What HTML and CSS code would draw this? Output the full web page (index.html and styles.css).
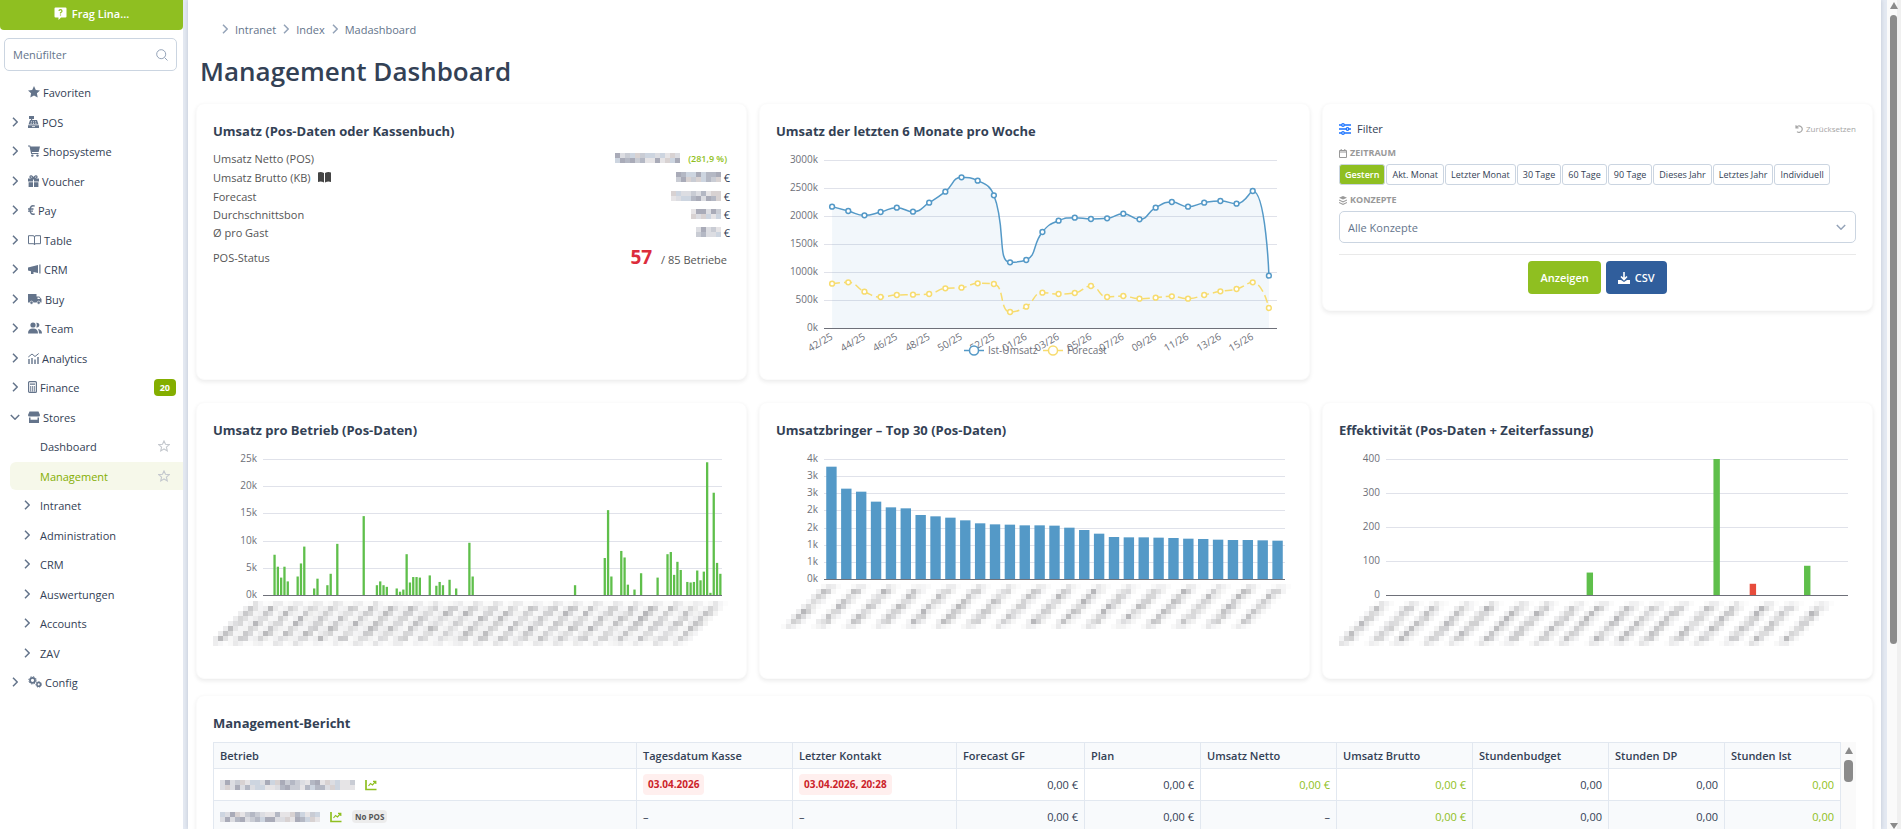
FILE: index.html
```html
<!DOCTYPE html>
<html lang="de">
<head>
  <meta charset="UTF-8" />
  <title>Management Dashboard</title>
  <meta name="viewport" content="width=device-width, initial-scale=1.0" />
  <link rel="stylesheet" href="styles.css">
</head>
<body>

<!-- Icon sprite -->
<svg class="sprite" aria-hidden="true">
  <symbol id="chev" viewBox="0 0 6 10"><path d="M1 .8 5.2 5 1 9.2" fill="none" stroke="currentColor" stroke-width="1.500"/></symbol>
  <symbol id="chev-down" viewBox="0 0 10 6"><path d="M.8 1 5 5.2 9.2 1" fill="none" stroke="currentColor" stroke-width="1.500"/></symbol>
  <symbol id="star" viewBox="0 0 12 12"><path d="M6 0 7.800 3.900l4.200.5-3.100 2.900.8 4.300L6 9.500l-3.700 2.100.8-4.300L0 4.400l4.200-.5z"/></symbol>
  <symbol id="star-o" viewBox="0 0 12 12"><path d="M6 .9 7.500 4.200l3.800.4-2.900 2.500.9 3.800L6 9l-3.300 1.900.9-3.800L.7 4.600l3.800-.4z" fill="none" stroke="currentColor" stroke-width="1.100"/></symbol>
  <symbol id="register" viewBox="0 0 11 12"><path d="M1 0h5v3H4.200v1H9l1.500 4.500H.5L2 4h1V3H1z M0 9.200h11V12H0z"/><path d="M3 5.800h1m1 0h1m1 0h1M2.600 7.400h1m1.400 0h1m1.400 0h1M4 10.600h3" stroke="#fff" stroke-width=".8"/></symbol>
  <symbol id="cart" viewBox="0 0 12 12"><path d="M0 .5h2.200l.3 1H12L10.700 7H3.900l.2 1h6.400v1H3.200L1.500 1.500H0z"/><circle cx="4.300" cy="10.600" r="1.200"/><circle cx="9.500" cy="10.600" r="1.200"/></symbol>
  <symbol id="gift" viewBox="0 0 11 12"><path d="M0 3.500h5v3H0zM6 3.500h5v3H6zM.6 7.300H5V12H.6zM6 7.300h4.400V12H6z"/><path d="M5.500 3.400C4.500.5 2 .2 2 2c0 1 1.500 1.400 3.500 1.400S9 3 9 2C9 .2 6.500.5 5.500 3.400z" fill="none" stroke="currentColor" stroke-width="1.200"/></symbol>
  <symbol id="euro" viewBox="0 0 7 12"><path d="M6.700 2.200C3.900.9 2 2.700 2 6s1.900 5.100 4.700 3.800M0 5h5.500M0 7.100h5" fill="none" stroke="currentColor" stroke-width="1.400"/></symbol>
  <symbol id="book" viewBox="0 0 13 12"><path d="M.5 1.700H5q1.500 0 1.500 1.300Q6.500 1.700 8 1.700h4.500v8H8q-1.500 0-1.500 1Q6.500 9.700 5 9.700H.5zM6.500 3v7.500" fill="none" stroke="currentColor"/></symbol>
  <symbol id="horn" viewBox="0 0 13 12"><path d="M0 4.500 10 2v8L5.500 8.900V11H3V8.300L0 7.500zM11.300 1.500h1.200v9h-1.200z"/></symbol>
  <symbol id="truck" viewBox="0 0 14 12"><path d="M0 1h8.500v2.500h2.800L13.500 6v3.500H0z"/><circle cx="3.500" cy="9.700" r="1.600" stroke="#fff" stroke-width=".6"/><circle cx="10.700" cy="9.700" r="1.600" stroke="#fff" stroke-width=".6"/><path d="M9.500 4.500h1.600L12.400 6H9.500z" fill="#fff"/></symbol>
  <symbol id="users" viewBox="0 0 14 12"><circle cx="5" cy="3" r="2.600"/><path d="M0 11.500q0-5 5-5t5 5zM8.300.8a2.400 2.400 0 1 1 0 4.600q1-2.300 0-4.600zM10 7q4 .5 4 4.500h-3q0-2.500-1-4.500z"/></symbol>
  <symbol id="stats" viewBox="0 0 11 12"><path d="M1 12V7m3 5V6m3 6V7.500M10 12V5" stroke="currentColor" stroke-width="1.400"/><path d="M.3 5 4 2l3 2.500L10.700 1.500" fill="none" stroke="currentColor"/></symbol>
  <symbol id="calc" viewBox="0 0 9 12"><rect x=".6" y=".6" width="7.800" height="10.800" rx="1" fill="none" stroke="currentColor" stroke-width="1.200"/><path d="M2 3.200h5M2 6h1.200m.7 0h1.200m.7 0H7M2 8h1.200m.7 0h1.200m.7 0H7M2 9.800h1.200m.7 0h1.200m.7 0H7" stroke="currentColor" stroke-width="1.300"/></symbol>
  <symbol id="store" viewBox="0 0 12 12"><path d="M1.500.5h9L12 4q0 1.500-1.500 1.500h-9Q0 5.500 0 4zM1 6.500h1.500v2.300h7V6.500H11V12H1z"/></symbol>
  <symbol id="cogs" viewBox="0 0 14 12"><circle cx="4.500" cy="4.300" r="2.500" fill="none" stroke="currentColor" stroke-width="1.800"/><circle cx="4.500" cy="4.300" r="3.700" fill="none" stroke="currentColor" stroke-dasharray="1.500 1.400"/><circle cx="10.700" cy="8.400" r="1.800" fill="none" stroke="currentColor" stroke-width="1.500"/><circle cx="10.700" cy="8.400" r="2.800" fill="none" stroke="currentColor" stroke-dasharray="1.300 1.200"/></symbol>
  <symbol id="trend" viewBox="0 0 12 12"><path d="M1 1v9.500h10.500" fill="none" stroke="currentColor" stroke-width="1.700"/><path d="m3.500 7 2-2.500L7.500 6 10.500 2.500M8 2.300h2.800V5" fill="none" stroke="currentColor" stroke-width="1.200"/></symbol>
</svg>

<aside class="sidebar">
  <button class="ask" type="button">
    <svg width="13" height="13" viewBox="0 0 13 13"><path d="M1.500.5h10q1 0 1 1v8q0 1-1 1H7L4.500 13v-2.500h-3q-1 0-1-1v-8q0-1 1-1z" fill="#fff"/><path d="M5 4q0-1.300 1.500-1.300T8 4.200Q8 5 6.500 5.700v.8m0 .9v1.200" fill="none" stroke="#8fbf21" stroke-width="1.200"/></svg>
    Frag Lina...
  </button>
  <div class="menu-filter">
    <input type="text" placeholder="Menüfilter" aria-label="Menüfilter" />
    <svg width="12" height="12" viewBox="0 0 12 12"><circle cx="5.200" cy="5.200" r="4.500"/><path d="m8.500 8.500 3 3"/></svg>
  </div>
  <nav class="menu">
    <a href="#" class="no-chev"><svg class="icon" width="12" height="12"><use href="#star"/></svg>Favoriten</a>
    <a href="#"><svg class="chev"><use href="#chev"/></svg><svg class="icon" width="11" height="12"><use href="#register"/></svg>POS</a>
    <a href="#"><svg class="chev"><use href="#chev"/></svg><svg class="icon" width="12" height="12"><use href="#cart"/></svg>Shopsysteme</a>
    <a href="#"><svg class="chev"><use href="#chev"/></svg><svg class="icon" width="11" height="12"><use href="#gift"/></svg>Voucher</a>
    <a href="#"><svg class="chev"><use href="#chev"/></svg><svg class="icon" width="7" height="12"><use href="#euro"/></svg>Pay</a>
    <a href="#"><svg class="chev"><use href="#chev"/></svg><svg class="icon" width="13" height="12"><use href="#book"/></svg>Table</a>
    <a href="#"><svg class="chev"><use href="#chev"/></svg><svg class="icon" width="13" height="12"><use href="#horn"/></svg>CRM</a>
    <a href="#"><svg class="chev"><use href="#chev"/></svg><svg class="icon" width="14" height="12"><use href="#truck"/></svg>Buy</a>
    <a href="#"><svg class="chev"><use href="#chev"/></svg><svg class="icon" width="14" height="12"><use href="#users"/></svg>Team</a>
    <a href="#"><svg class="chev"><use href="#chev"/></svg><svg class="icon" width="11" height="12"><use href="#stats"/></svg>Analytics</a>
    <a href="#"><svg class="chev"><use href="#chev"/></svg><svg class="icon" width="9" height="12"><use href="#calc"/></svg>Finance<span class="count">20</span></a>
    <a href="#" class="open"><svg class="chev-down"><use href="#chev-down"/></svg><svg class="icon" width="12" height="12"><use href="#store"/></svg>Stores</a>
    <a href="#" class="sub leaf">Dashboard<svg class="fav"><use href="#star-o"/></svg></a>
    <a href="#" class="sub leaf active">Management<svg class="fav"><use href="#star-o"/></svg></a>
    <a href="#" class="sub"><svg class="chev"><use href="#chev"/></svg>Intranet</a>
    <a href="#" class="sub"><svg class="chev"><use href="#chev"/></svg>Administration</a>
    <a href="#" class="sub"><svg class="chev"><use href="#chev"/></svg>CRM</a>
    <a href="#" class="sub"><svg class="chev"><use href="#chev"/></svg>Auswertungen</a>
    <a href="#" class="sub"><svg class="chev"><use href="#chev"/></svg>Accounts</a>
    <a href="#" class="sub"><svg class="chev"><use href="#chev"/></svg>ZAV</a>
    <a href="#"><svg class="chev"><use href="#chev"/></svg><svg class="icon" width="14" height="12"><use href="#cogs"/></svg>Config</a>
  </nav>
</aside>

<main class="main">
  <nav class="breadcrumb">
    <svg class="chev"><use href="#chev"/></svg><a href="#">Intranet</a>
    <svg class="chev"><use href="#chev"/></svg><a href="#">Index</a>
    <svg class="chev"><use href="#chev"/></svg><a href="#">Madashboard</a>
  </nav>
  <h1>Management Dashboard</h1>

  <div class="grid">
    <!-- Umsatz -->
    <section class="card">
      <h2>Umsatz (Pos-Daten oder Kassenbuch)</h2>
      <dl class="facts">
        <div><dt>Umsatz Netto (POS)</dt><dd><svg class="redacted" width="65" height="10"></svg><span class="percent">(281,9 %)</span></dd></div>
        <div class="with-icon"><dt>Umsatz Brutto (KB) <svg class="kb" width="13" height="11" viewBox="0 0 13 11"><path d="M0 .5q3-1 6 .5v9.500q-3-1.500-6-.5zM13 .5q-3-1-6 .5v9.500q3-1.500 6-.5z"/></svg></dt><dd><svg class="redacted" width="45" height="10"></svg><span>€</span></dd></div>
        <div><dt>Forecast</dt><dd><svg class="redacted" width="50" height="10"></svg><span>€</span></dd></div>
        <div><dt>Durchschnittsbon</dt><dd><svg class="redacted" width="30" height="10"></svg><span>€</span></dd></div>
        <div><dt>Ø pro Gast</dt><dd><svg class="redacted" width="25" height="10"></svg><span>€</span></dd></div>
        <div class="status"><dt>POS-Status</dt><dd><strong>57</strong><span>/ 85 Betriebe</span></dd></div>
      </dl>
    </section>

    <!-- Wochenumsatz -->
    <section class="card">
      <h2>Umsatz der letzten 6 Monate pro Woche</h2>
      <svg class="chart" id="chart-weeks" viewBox="0 0 517 221"></svg>
    </section>

    <!-- Filter -->
    <section class="card filter">
      <div class="filter-head">
        <span class="filter-title"><svg width="12" height="12" viewBox="0 0 12 12"><path d="M0 2h12M0 6h12M0 10h12" stroke="#1a73ff" stroke-width="1.300"/><g fill="#fff" stroke="#1a73ff" stroke-width="1.200"><circle cx="4" cy="2" r="1.300"/><circle cx="8.500" cy="6" r="1.300"/><circle cx="4" cy="10" r="1.300"/></g></svg>Filter</span>
        <button type="button" class="reset"><svg width="8" height="8" viewBox="0 0 8 8"><path d="M1 .3v2.500h2.500M1.200 2.600A3.200 3.200 0 1 1 2 6.600" fill="none" stroke="currentColor" stroke-width="1.200"/></svg>Zurücksetzen</button>
      </div>
      <p class="label"><svg width="8" height="9" viewBox="0 0 8 9"><path d="M.5 1.500h7v7h-7zM2.200 0v2M5.800 0v2M.5 3h7" fill="none" stroke="currentColor"/></svg>ZEITRAUM</p>
      <div class="ranges">
        <button type="button" class="selected">Gestern</button>
        <button type="button">Akt. Monat</button>
        <button type="button">Letzter Monat</button>
        <button type="button">30 Tage</button>
        <button type="button">60 Tage</button>
        <button type="button">90 Tage</button>
        <button type="button">Dieses Jahr</button>
        <button type="button">Letztes Jahr</button>
        <button type="button">Individuell</button>
      </div>
      <label class="label" for="konzepte"><svg width="8" height="9" viewBox="0 0 8 9"><path d="M4 0 8 1.800 4 3.600 0 1.800zM0 3.500l4 1.800 4-1.800v1L4 6.400 0 4.500zM0 6l4 1.800L8 6v1L4 9 0 7z" fill="currentColor"/></svg>KONZEPTE</label>
      <div class="select-wrap">
        <select id="konzepte"><option>Alle Konzepte</option></select>
        <svg class="chev-down"><use href="#chev-down"/></svg>
      </div>
      <div class="actions">
        <button type="button" class="btn">Anzeigen</button>
        <button type="button" class="btn btn-blue"><svg width="12" height="12" viewBox="0 0 12 12"><path d="M6 0v7M3 4.500l3 3 3-3" fill="none" stroke="#fff" stroke-width="1.600"/><path d="M0 8h3l3 2 3-2h3v4H0z" fill="#fff"/></svg>CSV</button>
      </div>
    </section>

    <section class="card">
      <h2>Umsatz pro Betrieb (Pos-Daten)</h2>
      <svg class="chart" id="chart-stores" viewBox="0 0 517 221"></svg>
    </section>
    <section class="card">
      <h2>Umsatzbringer – Top 30 (Pos-Daten)</h2>
      <svg class="chart" id="chart-top" viewBox="0 0 517 221"></svg>
    </section>
    <section class="card">
      <h2>Effektivität (Pos-Daten + Zeiterfassung)</h2>
      <svg class="chart" id="chart-effect" viewBox="0 0 517 221"></svg>
    </section>
  </div>

  <!-- Bericht -->
  <section class="card report">
    <h2>Management-Bericht</h2>
    <div class="table-wrap">
      <table>
        <colgroup>
          <col><col class="w156"><col class="w164"><col class="w128"><col class="w116"><col class="w136"><col class="w136"><col class="w136"><col class="w116"><col class="w116">
        </colgroup>
        <thead>
          <tr><th>Betrieb</th><th>Tagesdatum Kasse</th><th>Letzter Kontakt</th><th>Forecast GF</th><th>Plan</th><th>Umsatz Netto</th><th>Umsatz Brutto</th><th>Stundenbudget</th><th>Stunden DP</th><th>Stunden Ist</th></tr>
        </thead>
        <tbody>
          <tr>
            <td><div class="store"><svg class="redacted" width="135" height="10"></svg><svg class="trend"><use href="#trend"/></svg></div></td>
            <td><span class="late">03.04.2026</span></td><td><span class="late">03.04.2026, 20:28</span></td>
            <td class="num">0,00 €</td><td class="num">0,00 €</td><td class="num green">0,00 €</td><td class="num green">0,00 €</td><td class="num">0,00</td><td class="num">0,00</td><td class="num green">0,00</td>
          </tr>
          <tr>
            <td><div class="store"><svg class="redacted" width="100" height="10"></svg><svg class="trend"><use href="#trend"/></svg><span class="no-pos">No POS</span></div></td>
            <td>–</td><td>–</td>
            <td class="num">0,00 €</td><td class="num">0,00 €</td><td class="num">–</td><td class="num green">0,00 €</td><td class="num">0,00</td><td class="num">0,00</td><td class="num green">0,00</td>
          </tr>
        </tbody>
      </table>
      <div class="table-scroll"><i class="arrow-up"></i><i class="thumb"></i></div>
    </div>
  </section>
</main>

<div class="page-scroll"><i class="arrow-up"></i><i class="thumb"></i><i class="arrow-down"></i></div>

<script src="charts.js"></script>
</body>
</html>
```
FILE: styles.css
```css
* { box-sizing: border-box; }
body {
  margin: 0;
  height: 100vh;
  display: flex;
  overflow: hidden;
  background: #e4e9f2;
  color: #334155;
  font-family: "Segoe UI", "Open Sans", "Noto Sans", sans-serif;
  font-size: 11px;
}
button, input, select { font-family: inherit; }
a { color: inherit; text-decoration: none; }
.sprite { display: none; }

/* Sidebar */
.sidebar {
  flex: none;
  width: 183px;
  background: #fff;
}
.ask {
  display: flex;
  align-items: center;
  justify-content: center;
  gap: 5px;
  width: 100%;
  height: 30px;
  padding: 0 0 4px;
  border: none;
  border-radius: 0 0 4px 4px;
  background: #8fbf21;
  color: #fff;
  font-size: 11px;
  font-weight: 600;
}
.menu-filter {
  display: flex;
  align-items: center;
  height: 33px;
  margin: 8px 6px 7px 4px;
  padding: 0 8px;
  border: 1px solid #cbd5e1;
  border-radius: 5px;
}
.menu-filter input {
  flex: 1;
  min-width: 0;
  padding: 0;
  border: none;
  outline: none;
  font-size: 11px;
}
.menu-filter input::placeholder { color: #64748b; }
.menu-filter svg { fill: none; stroke: #94a3b8; }

.menu {
  display: flex;
  flex-direction: column;
  gap: 1px;
}
.menu a {
  display: flex;
  align-items: center;
  height: 28px;
  padding-left: 12px;
}
.menu a:nth-child(odd) { margin-bottom: 1px; }
.menu .no-chev { padding-left: 28px; }
.menu .open { padding-left: 10px; }
.menu .sub {
  margin-left: 10px;
  padding-left: 14px;
}
.menu .leaf {
  padding-left: 30px;
  border-radius: 6px 0 0 6px;
}
.menu .active { background: #f6f8ea; color: #84ae00; }
.chev {
  flex: none;
  width: 6px;
  height: 10px;
  margin-right: 10px;
  color: #64748b;
}
.chev-down {
  flex: none;
  width: 10px;
  height: 6px;
  margin-right: 8px;
  color: #64748b;
}
.icon {
  flex: none;
  margin-right: 3px;
  fill: #64748b;
  color: #64748b;
}
.count {
  margin-left: auto;
  margin-right: 7px;
  padding: 0 6px;
  border-radius: 4px;
  background: #84ae00;
  color: #fff;
  font-size: 9px;
  font-weight: 700;
  line-height: 17px;
}
.fav {
  width: 12px;
  height: 12px;
  margin-left: auto;
  margin-right: 13px;
  color: #c4c8ce;
}

/* Content */
.main {
  flex: 1;
  min-width: 0;
  margin: 0 6px 0 5px;
  padding: 19px 8px 0;
  overflow: hidden;
  background: #fff;
  box-shadow: 0 0 4px rgba(100, 116, 139, 0.3);
}
.breadcrumb {
  display: flex;
  align-items: center;
  height: 20px;
  padding-left: 26px;
  color: #64748b;
  font-size: 11px;
}
.breadcrumb .chev { margin-right: 7px; color: #94a3b8; }
.breadcrumb a { margin-right: 7px; }
h1 {
  margin: 13px 0 13px 4px;
  font-size: 26px;
  font-weight: 600;
  line-height: 38px;
}
h2 {
  margin: 0;
  font-size: 13px;
  font-weight: 700;
  line-height: 22px;
}
.grid {
  display: grid;
  grid-template-columns: repeat(3, minmax(0, 1fr));
  gap: 22px 12px;
}
.card {
  padding: 16px;
  border: 1px solid #fbfbfb;
  border-radius: 8px;
  background: #fff;
  box-shadow: 0 2px 4px rgba(0, 0, 0, 0.08);
}
.chart { display: block; width: 100%; }
.chart text { fill: #6e7079; font-size: 10px; }

.facts { margin: 7px 0 0; color: #555; }
.facts div {
  display: flex;
  align-items: center;
  justify-content: space-between;
  height: 18px;
}
.facts .with-icon { height: 20px; }
.facts dd {
  display: flex;
  align-items: center;
  gap: 3px;
  margin: 0;
  color: #334155;
}
.facts .percent {
  margin: 0 3px 0 5px;
  color: #8fbf21;
  font-size: 9px;
  font-weight: 600;
}
.kb { margin-left: 5px; fill: #444; vertical-align: -1px; }
.facts .status { height: 32px; }
.status dd { align-items: baseline; gap: 9px; margin-right: 3px; color: #555; }
.status strong { color: #dc2c3c; font-size: 19px; font-weight: 700; }

/* Filter */
.filter { align-self: start; }
.filter-head {
  display: flex;
  align-items: center;
  justify-content: space-between;
  height: 17px;
  margin-bottom: 9px;
}
.filter-title { display: flex; align-items: center; gap: 6px; }
.reset {
  display: flex;
  align-items: center;
  gap: 3px;
  padding: 0;
  border: none;
  background: none;
  color: #a5a5a5;
  font-size: 8px;
}
.label {
  display: flex;
  align-items: center;
  gap: 3px;
  margin: 0 0 4px;
  color: #999;
  font-size: 9px;
  font-weight: 700;
  line-height: 14px;
}
.ranges { display: flex; gap: 1px; margin-bottom: 8px; }
.ranges button {
  height: 21px;
  padding: 0 5px;
  border: 1px solid #cbd5e1;
  border-radius: 3px;
  background: #fff;
  color: #334155;
  font-size: 9px;
  font-weight: 500;
  white-space: nowrap;
}
.ranges .selected { background: #8fbf21; color: #fff; font-weight: 600; }
.select-wrap { display: flex; align-items: center; position: relative; }
select {
  width: 100%;
  height: 32px;
  padding: 0 8px;
  border: 1px solid #cbd5e1;
  border-radius: 5px;
  background: #fff;
  color: #64748b;
  font-size: 11px;
  appearance: none;
}
.select-wrap .chev-down {
  position: absolute;
  right: 10px;
  margin: 0;
  color: #94a3b8;
}
.actions {
  display: flex;
  justify-content: center;
  gap: 5px;
  margin-top: 11px;
  padding-top: 6px;
  border-top: 1px solid #e9e9e9;
}
.btn {
  display: flex;
  align-items: center;
  gap: 5px;
  height: 33px;
  padding: 0 12px;
  border: none;
  border-radius: 4px;
  background: #8fbf21;
  color: #fff;
  font-size: 11px;
  font-weight: 600;
}
.btn-blue { background: #305e9c; }

/* Report */
.report { margin-top: 16px; }
.report h2 { margin-bottom: 8px; }
.table-wrap { display: flex; }
table {
  flex: 1;
  table-layout: fixed;
  border-collapse: collapse;
}
th, td {
  padding: 0 6px;
  border: 1px solid #e2e8f0;
  text-align: left;
}
th {
  height: 26px;
  background: #f8fafc;
  font-size: 11px;
  font-weight: 600;
}
td { height: 32px; font-size: 11px; }
tr:nth-child(even) td { background: #f8fafc; }
.w156 { width: 156px; }
.w164 { width: 164px; }
.w128 { width: 128px; }
.w116 { width: 116px; }
.w136 { width: 136px; }
.num { text-align: right; }
.green { color: #8fbf21; }
.store { display: flex; align-items: center; }
.trend {
  width: 12px;
  height: 12px;
  margin: 0 10px;
  color: #8fbf21;
}
.late {
  display: inline-block;
  padding: 0 5px;
  border-radius: 4px;
  background: #ffefee;
  color: #cc1f2a;
  font-size: 10px;
  font-weight: 700;
  line-height: 21px;
}
.no-pos {
  padding: 0 3px;
  border-radius: 4px;
  background: #ececec;
  color: #555;
  font-size: 8px;
  font-weight: 700;
  line-height: 13px;
}

/* Scrollbars */
.table-scroll, .page-scroll {
  display: flex;
  flex-direction: column;
  align-items: center;
  flex: none;
  background: #fafafa;
}
.table-scroll { width: 15px; padding-top: 5px; }
.page-scroll {
  width: 14px;
  padding: 2px 0 0 3px;
  border-right: 4px solid #f0f0f0;
}
.arrow-up {
  border: 4px solid transparent;
  border-top: none;
  border-bottom: 7px solid #8b8b8b;
}
.arrow-down {
  margin-top: auto;
  border: 4px solid transparent;
  border-bottom: none;
  border-top: 6px solid #8b8b8b;
}
.thumb { border-radius: 4px; background: #8b8b8b; }
.table-scroll .thumb { width: 9px; height: 22px; margin-top: 6px; }
.page-scroll .thumb { width: 7px; height: 76%; margin-top: 6px; }
```
FILE: charts.js
```javascript
const NS = "http://www.w3.org/2000/svg";

function add(parent, name, attrs, text) {
  const el = document.createElementNS(NS, name);
  for (const key in attrs) el.setAttribute(key, attrs[key]);
  if (text) el.textContent = text;
  parent.appendChild(el);
  return el;
}

// small repeatable random generator for the masked labels
let seed = 7;
function rnd() {
  seed = (seed * 16807) % 2147483647;
  return seed / 2147483647;
}

function drawAxis(svg, x0, x1, top, bottom, labels) {
  labels.forEach((label, i) => {
    const y = Math.round(top + (bottom - top) * i / (labels.length - 1));
    const last = i === labels.length - 1;
    if (!last) add(svg, "path", { d: `M${x0} ${y + 0.5}H${x1}`, stroke: "#e0e2ea", "shape-rendering": "crispEdges" });
    add(svg, "text", { x: x0 - 6, y: y + 3, "text-anchor": "end" }, label);
  });
}

function drawBase(svg, x0, x1, bottom) {
  add(svg, "path", { d: `M${x0} ${bottom + 0.5}H${x1}`, stroke: "#6e7079", "shape-rendering": "crispEdges" });
}

function drawBars(svg, x0, x1, top, bottom, slots, max, width, bars) {
  const step = (x1 - x0) / slots;
  bars.forEach(([i, v, color]) => {
    const h = v / max * (bottom - top);
    add(svg, "rect", {
      x: x0 + step * (i + 0.5) - width / 2, y: bottom - h,
      width: width, height: h, fill: color
    });
  });
}

// slanted masked labels, one streak for each label
function drawMask(svg, first, pitch, count, top, rows) {
  for (let s = 0; s < count; s++) {
    for (let r = 0; r < rows; r++) {
      const x = Math.round((first + s * pitch - r * 5) / 5) * 5;
      const y = top + r * 5;
      const edge = r === 0 || r === rows - 1 ? 0.4 : 1;
      [[-5, 0.12], [0, 0.45], [5, 0.3], [10, 0.08]].forEach(([dx, a]) => {
        add(svg, "rect", { x: x + dx, y: y, width: 5, height: 5, fill: "#77777c", opacity: (a * edge * (0.5 + rnd() * 0.7)).toFixed(2) });
      });
    }
  }
}

function smoothPath(pts) {
  const clamp = (v, a, b) => Math.max(Math.min(a, b), Math.min(Math.max(a, b), v));
  let d = `M${pts[0]}`;
  let out = pts[0];
  for (let i = 1; i < pts.length; i++) {
    const p = pts[i], prev = pts[i - 1], next = pts[i + 1];
    let inn = p, nextOut = p;
    if (next) {
      const l0 = Math.hypot(p[0] - prev[0], p[1] - prev[1]);
      const l1 = Math.hypot(next[0] - p[0], next[1] - p[1]);
      nextOut = [0, 1].map(k => clamp(p[k] + (next[k] - prev[k]) * 0.5 * l1 / (l0 + l1), p[k], next[k]));
      inn = [0, 1].map(k => clamp(p[k] - (nextOut[k] - p[k]) * l0 / l1, prev[k], p[k]));
      nextOut = [0, 1].map(k => p[k] + (p[k] - inn[k]) * l1 / l0);
    }
    d += `C${out} ${inn} ${p}`;
    out = nextOut;
  }
  return d;
}

// Weekly turnover
(function () {
  const svg = document.getElementById("chart-weeks");
  const actual = [2167, 2089, 2012, 2071, 2149, 2077, 2238, 2435, 2690, 2631, 2369, 1173, 1214, 1714, 1917, 1970, 1946, 1958, 2042, 1940, 2149, 2250, 2167, 2238, 2268, 2220, 2446, 935];
  const forecast = [792, 815, 649, 554, 589, 595, 607, 708, 720, 798, 786, 286, 381, 631, 607, 625, 750, 554, 571, 524, 542, 565, 524, 589, 655, 696, 815, 357];
  const weeks = ["42/25", "44/25", "46/25", "48/25", "50/25", "52/25", "01/26", "03/26", "05/26", "07/26", "09/26", "11/26", "13/26", "15/26"];
  const step = 453 / 28;
  const points = list => list.map((v, i) => [48 + step * (i + 0.5), 186 - v * 168 / 3000]);

  drawAxis(svg, 48, 501, 18, 186, ["3000k", "2500k", "2000k", "1500k", "1000k", "500k", "0k"]);
  const a = points(actual), f = points(forecast);
  add(svg, "path", { d: smoothPath(a) + `V186H${a[0][0]}Z`, fill: "#5499c7", opacity: 0.08 });
  drawBase(svg, 48, 501, 186);
  weeks.forEach((w, i) => {
    const x = 48 + step * (2 * i + 0.5);
    add(svg, "text", { x: x, y: 197, "text-anchor": "end", transform: `rotate(-30 ${x} 194)` }, w);
  });
  [[a, "#5499c7", ""], [f, "#f7dc6f", "8 4"]].forEach(([pts, color, dash]) => {
    add(svg, "path", { d: smoothPath(pts), fill: "none", stroke: color, "stroke-width": 1.5, "stroke-dasharray": dash });
    pts.forEach(p => add(svg, "circle", { cx: p[0], cy: p[1], r: 2.4, fill: "#fff", stroke: color, "stroke-width": 1.5 }));
  });
  [[198, "#5499c7", "Ist-Umsatz"], [277, "#f7dc6f", "Forecast"]].forEach(([x, color, name]) => {
    add(svg, "path", { d: `M${x - 10} 208.5h20`, stroke: color, "stroke-width": 1.5, "stroke-dasharray": name === "Forecast" ? "8 4" : "" });
    add(svg, "circle", { cx: x, cy: 208.5, r: 4.5, fill: "#fff", stroke: color, "stroke-width": 1.5 });
    add(svg, "text", { x: x + 14, y: 212 }, name);
  });
})();

// Turnover per store
(function () {
  const svg = document.getElementById("chart-stores");
  const bars = [[3, 7.4], [4, 5.2], [5, 3.2], [6, 5.2], [7, 2.5], [10, 3.4], [11, 5.8], [12, 8.9], [15, 1.2], [16, 3], [19, 1.8], [20, 3.9], [22, 9.4], [30, 14.5], [34, 1.8], [35, 2.5], [36, 1.8], [37, 1.5], [40, 1.2], [41, 0.6], [42, 1], [43, 7.5], [44, 2.3], [45, 3.3], [46, 3.3], [47, 3.2], [50, 3.6], [52, 1.7], [53, 2.4], [54, 1.8], [56, 2.8], [58, 1.2], [62, 9.6], [63, 3.4], [94, 1.8], [103, 6.8], [104, 15.6], [105, 3.4], [108, 8.1], [109, 6.9], [110, 1.9], [112, 1], [114, 4], [119, 3.2], [122, 7.5], [123, 7.9], [124, 3.7], [125, 6.1], [126, 4.6], [128, 2.4], [129, 2.3], [130, 2.4], [131, 4.5], [132, 2.7], [133, 4.3], [134, 24.4], [135, 0.4], [136, 18.8], [137, 5.9], [138, 3.9]];
  drawAxis(svg, 50, 509, 18, 154, ["25k", "20k", "15k", "10k", "5k", "0k"]);
  drawBars(svg, 50, 509, 18, 154, 139, 25, 2.3, bars.map(b => [b[0], b[1], "#5fbf4b"]));
  drawBase(svg, 50, 509, 154);
  drawMask(svg, 42, 20, 24, 160, 9);
})();

// Top 30
(function () {
  const svg = document.getElementById("chart-top");
  const values = [3276, 2635, 2547, 2256, 2090, 2061, 1867, 1828, 1789, 1711, 1624, 1594, 1585, 1565, 1565, 1556, 1497, 1429, 1322, 1225, 1215, 1215, 1206, 1196, 1176, 1167, 1147, 1137, 1137, 1128, 1118];
  drawAxis(svg, 48, 509, 18, 138, ["4k", "3k", "3k", "2k", "2k", "1k", "1k", "0k"]);
  drawBars(svg, 48, 509, 18, 138, 31, 3500, 10.4, values.map((v, i) => [i, v, "#5499c7"]));
  drawBase(svg, 48, 509, 138);
  drawMask(svg, 50, 30, 16, 143, 9);
})();

// Effectiveness
(function () {
  const svg = document.getElementById("chart-effect");
  drawAxis(svg, 47, 509, 18, 154, ["400", "300", "200", "100", "0"]);
  drawBars(svg, 47, 509, 18, 154, 51, 400, 6.4, [[22, 66, "#5fbf4b"], [36, 400, "#5fbf4b"], [40, 33, "#e74c3c"], [46, 86, "#5fbf4b"]]);
  drawBase(svg, 47, 509, 154);
  drawMask(svg, 42, 27.3, 17, 160, 9);
})();

// Masked figures and names
document.querySelectorAll(".redacted").forEach(svg => {
  const colors = ["#c9ccd4", "#dcdde2", "#b4b8c4", "#e6e4e6", "#cdd5e0", "#a9abb8", "#d8d2d2"];
  for (let x = 0; x < svg.width.baseVal.value; x += 5) {
    for (let y = 0; y < 10; y += 5) {
      add(svg, "rect", { x: x, y: y, width: 5, height: 5, fill: colors[Math.floor(rnd() * colors.length)] });
    }
  }
});
```
